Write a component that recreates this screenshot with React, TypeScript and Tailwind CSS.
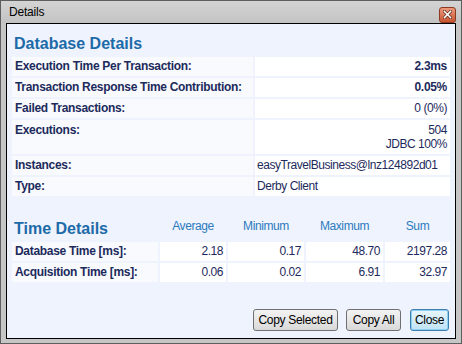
import React from "react";

const font = { fontFamily: '"Liberation Sans", Arial, sans-serif' };

type Row = { label: string; value: React.ReactNode; align?: "left" | "right"; bold?: boolean; tall?: boolean };

const rows: Row[] = [
  { label: "Execution Time Per Transaction:", value: "2.3ms", bold: true },
  { label: "Transaction Response Time Contribution:", value: "0.05%", bold: true },
  { label: "Failed Transactions:", value: "0 (0%)" },
  {
    label: "Executions:",
    value: (
      <>
        <div>504</div>
        <div>JDBC 100%</div>
      </>
    ),
    tall: true,
  },
  { label: "Instances:", value: "easyTravelBusiness@lnz124892d01", align: "left" },
  { label: "Type:", value: "Derby Client", align: "left" },
];

const timeRows = [
  { label: "Database Time [ms]:", values: ["2.18", "0.17", "48.70", "2197.28"] },
  { label: "Acquisition Time [ms]:", values: ["0.06", "0.02", "6.91", "32.97"] },
];

const DetailRow: React.FC<{ row: Row }> = ({ row }) => {
  if (row.tall) {
    return (
      <div className="grid grid-cols-[241px_195px] gap-[2px]">
        <div className="h-[34px] bg-[#f8fafd] pl-[3px] pt-[3px] text-[12px] leading-[14px] font-bold text-[#1d2a5c] tracking-[-0.3px]">
          {row.label}
        </div>
        <div className="h-[34px] bg-white pr-[3px] pt-[3px] text-right text-[12px] leading-[14px] text-[#1d2a5c] tracking-[-0.45px]">
          {row.value}
        </div>
      </div>
    );
  }
  return (
    <div className="grid grid-cols-[241px_195px] gap-[2px]">
      <div className="h-[19px] bg-[#f8fafd] pl-[3px] text-[12px] leading-[19px] font-bold text-[#1d2a5c] tracking-[-0.3px] whitespace-nowrap">
        {row.label}
      </div>
      <div
        className={
          row.align === "left"
            ? "h-[19px] bg-white pl-[2px] text-left text-[12px] leading-[19px] text-[#1d2a5c] tracking-[-0.45px] whitespace-nowrap"
            : row.bold
            ? "h-[19px] bg-white pr-[3px] text-right text-[12px] leading-[19px] font-bold text-[#1d2a5c] tracking-[-0.3px]"
            : "h-[19px] bg-white pr-[3px] text-right text-[12px] leading-[19px] text-[#1d2a5c] tracking-[-0.45px]"
        }
      >
        {row.value}
      </div>
    </div>
  );
};

const App: React.FC = () => {
  return (
    <div style={font} className="w-[462px] h-[344px] flex flex-col bg-[#c6c6c6] border border-[#5e5e5e]">
      {/* title bar */}
      <div className="h-[22px] flex items-center bg-gradient-to-b from-[#d4d4d4] to-[#c3c3c3]">
        <span className="pl-[8px] text-[12px] text-black tracking-[-0.2px]">Details</span>
        <button className="ml-auto mr-[5px] mt-[5px] w-[17px] h-[16px] flex items-center justify-center rounded-[3px] border border-[#8c3b22] bg-gradient-to-b from-[#eb9a7d] to-[#c9532f]">
          <svg width="9" height="9" viewBox="0 0 9 9">
            <path d="M1.5 1.5L7.5 7.5M7.5 1.5L1.5 7.5" stroke="#5a2414" strokeWidth="3" strokeLinecap="square" />
            <path d="M1.5 1.5L7.5 7.5M7.5 1.5L1.5 7.5" stroke="#ffffff" strokeWidth="1.6" strokeLinecap="square" />
          </svg>
        </button>
      </div>

      {/* content panel */}
      <div className="flex-1 ml-[5px] mr-[5px] mb-[4px] border border-black bg-[#eff3fd] flex flex-col pl-[5px] pr-[4px] pt-[10px] pb-[7px]">
        <div className="h-[20px] pl-[2px] text-[16px] leading-[20px] font-bold text-[#1c6aa8]">Database Details</div>
        <div className="mt-[3px] flex flex-col gap-[2px]">
          {rows.map((r) => (
            <DetailRow key={r.label} row={r} />
          ))}
        </div>

        <div className="mt-[23px] grid grid-cols-[146px_66px_76px_77px_65px] gap-x-[2px] items-start">
          <div className="h-[20px] pl-[2px] text-[16px] leading-[20px] font-bold text-[#1c6aa8] whitespace-nowrap">Time Details</div>
          {["Average", "Minimum", "Maximum", "Sum"].map((h) => (
            <div key={h} className="text-center text-[12px] leading-[14px] text-[#2b7bbd] tracking-[-0.4px]">
              {h}
            </div>
          ))}
        </div>
        <div className="mt-[3px] flex flex-col gap-[2px]">
          {timeRows.map((r) => (
            <div key={r.label} className="grid grid-cols-[146px_66px_76px_77px_65px] gap-[2px]">
              <div className="h-[19px] bg-[#f8fafd] pl-[3px] text-[12px] leading-[19px] font-bold text-[#1d2a5c] tracking-[-0.3px] whitespace-nowrap">
                {r.label}
              </div>
              {r.values.map((v, i) => (
                <div key={i} className="h-[19px] bg-white pr-[3px] text-right text-[12px] leading-[19px] text-[#1d2a5c] tracking-[-0.45px]">
                  {v}
                </div>
              ))}
            </div>
          ))}
        </div>

        <div className="mt-auto flex justify-end gap-[8px] pr-[2px]">
          <button className="w-[85px] h-[22px] rounded-[3px] border border-[#707070] bg-gradient-to-b from-[#f3f3f3] to-[#d9d9d9] text-[12px] text-black tracking-[-0.3px]">
            Copy Selected
          </button>
          <button className="w-[55px] h-[22px] rounded-[3px] border border-[#707070] bg-gradient-to-b from-[#f3f3f3] to-[#d9d9d9] text-[12px] text-black tracking-[-0.3px]">
            Copy All
          </button>
          <button className="ml-[1px] w-[39px] h-[22px] rounded-[3px] border border-[#3c7fb1] bg-gradient-to-b from-[#e8f6fd] to-[#bfe3f6] shadow-[inset_0_0_0_1px_#8fd0f2] text-[12px] text-black tracking-[-0.3px]">
            Close
          </button>
        </div>
      </div>
    </div>
  );
};

export default App;
